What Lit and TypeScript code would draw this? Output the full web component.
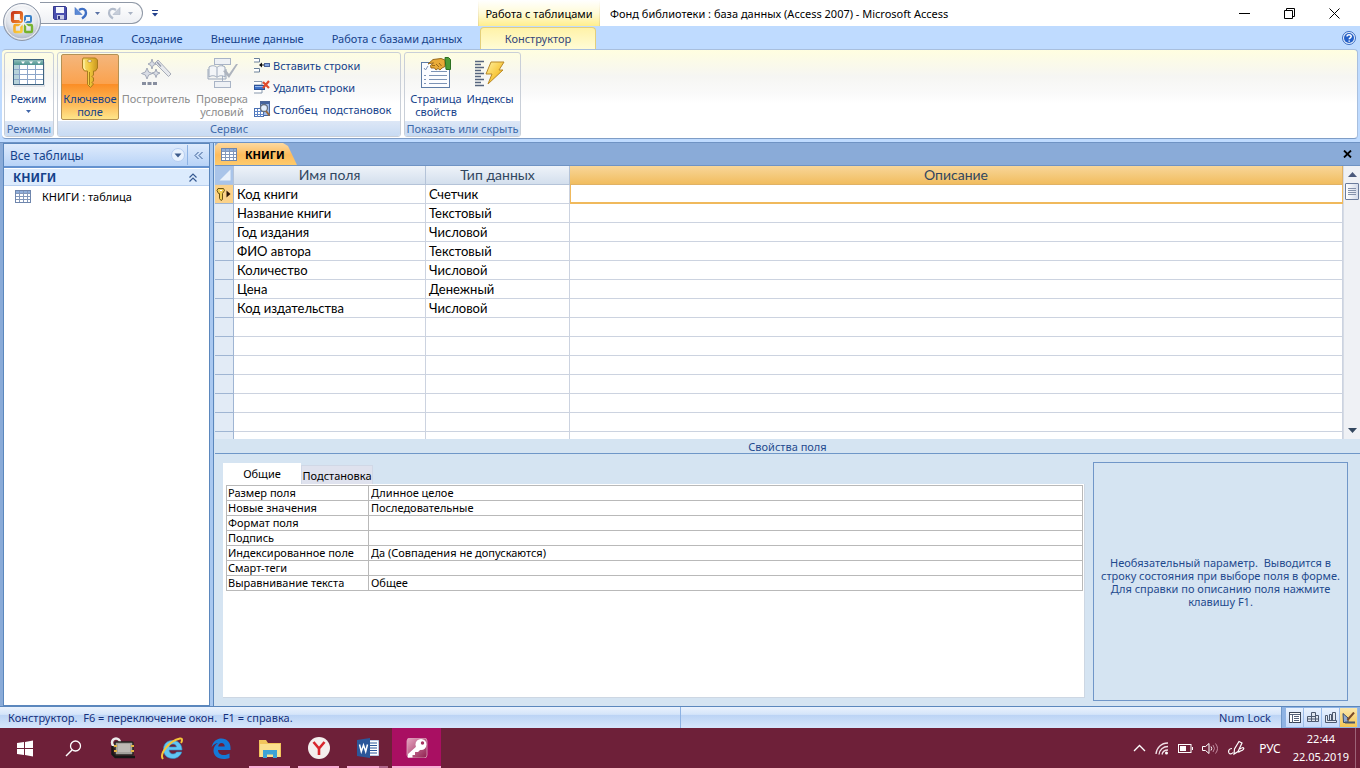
import { LitElement, html, css, svg } from "lit";
import { customElement, state } from "lit/decorators.js";
import { classMap } from "lit/directives/class-map.js";

const fields = [
  ["Код книги", "Счетчик"],
  ["Название книги", "Текстовый"],
  ["Год издания", "Числовой"],
  ["ФИО автора", "Текстовый"],
  ["Количество", "Числовой"],
  ["Цена", "Денежный"],
  ["Код издательства", "Числовой"],
];
const blankRows = Array.from({ length: 30 }, () => ["", ""]);

const properties = [
  ["Размер поля", "Длинное целое"],
  ["Новые значения", "Последовательные"],
  ["Формат поля", ""],
  ["Подпись", ""],
  ["Индексированное поле", "Да (Совпадения не допускаются)"],
  ["Смарт-теги", ""],
  ["Выравнивание текста", "Общее"],
];

const icon = (w: number, h: number, body: unknown) =>
  html`<svg class="icon" width=${w} height=${h} viewBox="0 0 ${w} ${h}" aria-hidden="true">${body}</svg>`;

const officeLogo = icon(40, 40, svg`
  <defs>
    <radialGradient id="orb" cx="50%" cy="30%" r="75%">
      <stop offset="0" stop-color="#fff"/><stop offset=".55" stop-color="#e3e6ec"/><stop offset=".85" stop-color="#b4bccb"/><stop offset="1" stop-color="#eef1f6"/>
    </radialGradient>
    <linearGradient id="lr" x1="0" y1="0" x2="1" y2="1"><stop offset="0" stop-color="#c8371b"/><stop offset="1" stop-color="#f0892c"/></linearGradient>
    <linearGradient id="ly" x1="0" y1="0" x2="1" y2="1"><stop offset="0" stop-color="#f3a427"/><stop offset="1" stop-color="#fbd23c"/></linearGradient>
  </defs>
  <circle cx="20" cy="20" r="18.5" fill="url(#orb)" stroke="#8d97a8"/>
  <circle cx="20" cy="20" r="17" fill="none" stroke="#fff" stroke-opacity=".8"/>
  <rect x="10.5" y="10.5" width="9" height="9" rx="1.5" fill="none" stroke="url(#lr)" stroke-width="3.2"/>
  <rect x="23" y="14" width="6" height="6" rx="1" fill="none" stroke="#3c82c8" stroke-width="2"/>
  <rect x="12.5" y="23" width="7" height="7" rx="1" fill="none" stroke="url(#ly)" stroke-width="2.6"/>
  <rect x="23" y="23" width="7" height="7" rx="1" fill="none" stroke="#77b32f" stroke-width="2.4"/>
  <path d="M16 16l3 3M26 17l-3 3M16 26l4-4M27 26l-4-4" stroke="#e9ecf2" stroke-width="1.6"/>`);

const saveIcon = icon(14, 14, svg`
  <path d="M.5.5h12l1 1v12H1.5l-1-1z" fill="#4a4fb0" stroke="#34388c"/>
  <rect x="3" y="1" width="8" height="6" fill="#f4f6fd"/><rect x="4" y="9" width="7" height="4.5" fill="#c7cbe6"/><rect x="5" y="10" width="2" height="3" fill="#30347e"/>`);
const undoIcon = icon(14, 14, svg`
  <path d="M5 4C9 1.5 12 3.5 12 7c0 2.5-1.5 4-4 5.5" fill="none" stroke="#3f6fc4" stroke-width="2.4"/>
  <path d="M1 1.5v7h7z" fill="#5b8ad6" stroke="#3f6fc4" stroke-width=".6"/>`);
const redoIcon = icon(14, 14, svg`
  <path d="M9 4C5 1.5 2 3.5 2 7c0 2.5 1.5 4 4 5.5" fill="none" stroke="#b3bccb" stroke-width="2.2"/>
  <path d="M13 1.5v7H6z" fill="#c6cdd9" stroke="#a9b3c4" stroke-width=".6"/>`);
const arrow = (c: string) => icon(5, 3, svg`<path d="M0 0h5L2.5 3z" fill=${c}/>`);
const customizeIcon = icon(6, 7, svg`<path d="M0 .5h6" stroke="#23408c"/><path d="M0 3h6L3 6.5z" fill="#23408c"/>`);

const minimizeIcon = icon(11, 11, svg`<path d="M0 5.5h11" stroke="#000"/>`);
const restoreIcon = icon(11, 11, svg`<path d="M.5 2.5h8v8h-8zM2.5 2.5v-2h8v8h-2" fill="none" stroke="#000"/>`);
const closeIcon = icon(11, 11, svg`<path d="M.5.5l10 10M10.5.5l-10 10" stroke="#000" fill="none"/>`);
const helpIcon = icon(14, 14, svg`
  <circle cx="7" cy="7" r="6.5" fill="#e9f1fc" stroke="#3a6cc0"/><circle cx="7" cy="7" r="5" fill="#2560c8"/>
  <path d="M5 5.6C5 3.2 9.2 3.3 9.2 5.4 9.2 6.8 7.2 6.8 7.2 8.3M7.2 9.5v1.3" fill="none" stroke="#fff" stroke-width="1.5"/>`);

const datasheetIcon = icon(32, 28, svg`
  <defs><linearGradient id="dh" x1="0" y1="0" x2="0" y2="1"><stop offset="0" stop-color="#8fbdb9"/><stop offset="1" stop-color="#4f9490"/></linearGradient></defs>
  <rect x=".5" y=".5" width="30" height="25" fill="#fff" stroke="#3f6480"/>
  <rect x="1" y="1" width="29" height="5" fill="url(#dh)"/>
  <rect x="1" y="6" width="5" height="19" fill="#b8d3da"/>
  <path d="M8 2.5h4l-2 2.5zM16 2.5h4l-2 2.5zM24 2.5h4l-2 2.5z" fill="#fff"/>
  <path d="M1 10.5h29M1 15.5h29M1 20.5h29M6.5 6v19M14.5 6v19M22.5 6v19" stroke="#8ba5c8" fill="none"/>
  <path d="M1 27h31V3" fill="none" stroke="#aab6c8" stroke-opacity=".6"/>`);
const keyIcon = icon(20, 32, svg`
  <defs><linearGradient id="kg" x1="0" y1="0" x2="1" y2="0"><stop offset="0" stop-color="#f8e27a"/><stop offset=".5" stop-color="#efc63a"/><stop offset="1" stop-color="#c8951f"/></linearGradient></defs>
  <path d="M3 1h12.5l2 2v8l-2 3h-2v4l-1.5 1.5 1.5 1.5v3l-1.5 1.5 1.5 1.5-3 3.5-3-3V14h-3l-2-3V3z" fill="url(#kg)" stroke="#a37618" stroke-width=".9"/>
  <ellipse cx="9.7" cy="4" rx="2.2" ry="1.2" fill="#fff" stroke="#a37618" stroke-width=".7"/>
  <path d="M9.5 15v13" stroke="#a87d1c"/><path d="M4 3v8l1.5 2" stroke="#fff6b8" fill="none"/>`);
const wandIcon = icon(32, 30, svg`
  <path d="M15 5l3-3L31 16l-2.5 2.5z" fill="#e7e9ed" stroke="#a7acb8"/><path d="M17 4l4 4.5" stroke="#969dae" stroke-width="1.5"/>
  <path d="M12 1l1 3.5 3 1.5-3 1.5-1 3.5-1-3.5L8 6l3-1.5zM7 10l1.6 4 3.9 1.5-3.9 1.5L7 21l-1.6-4-3.9-1.5L5.4 14zM16 11l1 3 3 1-3 1.5-1 3-1-3-3-1.5 3-1z" fill="#d9dde5" stroke="#9ba2b2" stroke-width=".9"/>
  <path d="M2 25.5h4M7.5 25.5h4M13 25.5h4" stroke="#878e9f" stroke-width="3"/>`);
const rulesIcon = icon(32, 32, svg`
  <rect x="8.5" y="1.5" width="16" height="6" fill="#eef1f5" stroke="#a9b4c6"/><rect x="8.5" y="24.5" width="16" height="6" fill="#eef1f5" stroke="#a9b4c6"/>
  <path d="M16.5 8v16" stroke="#a9b4c6"/>
  <path d="M3 10c3-2 6-1.5 8 .5 2-2 5-2.5 8-.5v10c-3-2-6-1.5-8 .5-2-2-5-2.5-8-.5z" fill="#f3f5f8" stroke="#9ba7ba"/><path d="M11 10.5V20M2 12v10h18V12" stroke="#9ba7ba" fill="none"/>
  <path d="M17 14l3-1 3 4 7-10 2 0-9 14z" fill="#aeb4be"/>`);
const insertRowsIcon = icon(16, 16, svg`
  <path d="M0 1.5h5.5V5H0M0 11.5h5.5V15H0" fill="#fff" stroke="#6b8098"/>
  <path d="M6.5 8h5" stroke="#111"/><path d="M5 8l3-2.5v5z" fill="#111"/><rect x="10.5" y="6.5" width="5" height="3" fill="#86a9e2" stroke="#4a6398"/>`);
const deleteRowsIcon = icon(16, 16, svg`
  <path d="M0 2.5h8V6H0M0 10.5h8V14H0" fill="#fff" stroke="#8797ac"/>
  <rect x=".5" y="6.5" width="10" height="4" fill="#3e72c8" stroke="#2c5299"/><rect x="1" y="7" width="9" height="1" fill="#9bbcf0"/>
  <path d="M9 3l6 6M15 2L9 9" stroke="#e04a2c" stroke-width="2.2"/>`);
const lookupIcon = icon(17, 17, svg`
  <rect x="6.5" y=".5" width="9" height="14" fill="#9ebaea" stroke="#4a6597"/><rect x="7" y="1" width="8" height="2" fill="#45649e"/>
  <rect x=".5" y="7.5" width="9" height="8" fill="#fff" stroke="#4b71b4"/><path d="M.5 10.5h9M.5 13.5h9M3.5 8v8M6.5 8v8" stroke="#5f86c8"/>
  <circle cx="10" cy="7" r="3.5" fill="#e3eefc" stroke="#66707e" stroke-width="1.3"/><path d="M12 10l3.5 4.5" stroke="#9a6a3c" stroke-width="2"/>`);
const propertySheetIcon = icon(32, 32, svg`
  <rect x="1.5" y="5.5" width="28" height="25" fill="#fbfcff" stroke="#5d7ba6"/>
  <path d="M4 11l1.5 2L8 9M11 14.5h16M4 18.5h2M9 18.5h18M4 22.5h2M9 22.5h18M4 26.5h2M9 26.5h18" stroke="#7b92b5" fill="none"/>
  <path d="M8 7l5-4.5 8-1 4 1.5v6.500l-3 1.500-2 2-2-1.500-2 1.500-1.500-2H11l-.5-2.500 3-2.500-4 .5z" fill="#e9ab38" stroke="#8f5f12" stroke-width=".9"/>
  <path d="M16 7l3 3M19 6l2.5 3M12 8.500h3" stroke="#9c6a18" fill="none"/>
  <path d="M25 .5h3.5l2 2v10H26z" fill="#4c9c37" stroke="#2c7020"/>`);
const indexIcon = icon(32, 28, svg`
  <path d="M1 2.5h9M1 5.5h6M1 8.5h9M1 11.5h6M1 14.5h9M1 17.5h6M1 20.5h9M1 23.5h6M1 26.5h9" stroke="#56657e" stroke-width="1.3"/>
  <defs><linearGradient id="bolt" x1="0" y1="0" x2="1" y2="1"><stop offset="0" stop-color="#fdf1a4"/><stop offset=".6" stop-color="#f8c638"/><stop offset="1" stop-color="#dc8d1d"/></linearGradient></defs>
  <path d="M17 3h13l-5 8h4L14 25l4-10h-6z" fill="url(#bolt)" stroke="#b98928"/>`);

const smallTable = icon(16, 13, svg`
  <rect x=".5" y=".5" width="15" height="12" fill="#fff" stroke="#6f86ad"/><rect x="1" y="1" width="14" height="2.5" fill="#8faedb"/>
  <path d="M1 3.5h14M1 6.5h14M1 9.5h14M4.5 1v11M8.5 1v11M12.5 1v11" stroke="#8398bb"/>`);
const dropIcon = icon(14, 14, svg`<circle cx="7" cy="7" r="6.5" fill="#e8f1fd" stroke="#b5cdf0"/><path d="M3.5 5.5h7L7 9.5z" fill="#3e5c8c"/>`);
const collapseIcon = icon(9, 9, svg`<path d="M4.5 1L1 4.5 4.5 8M8.5 1L5 4.5 8.5 8" fill="none" stroke="#365a92"/>`);
const foldIcon = icon(8, 9, svg`<path d="M.5 4.5L4 1l3.5 3.5M.5 8.5L4 5l3.5 3.5" fill="none" stroke="#365a92" stroke-width="1.2"/>`);
const cornerIcon = icon(18, 18, svg`<path d="M15.5 3.5v11H4.5z" fill="#e9f1fb"/>`);
const rowKeyIcon = icon(16, 13, svg`
  <path d="M2 .5h5.5l1 2-2 3v6L5 12.500l-1.500-2v-5H2.500l-1.500-3z" fill="#f2ce57" stroke="#6d5413"/><path d="M4 2.5h2" stroke="#fff"/><path d="M10.5 2.5v7l4-3.5z" fill="#2c1608"/>`);
const docCloseIcon = icon(9, 8, svg`<path d="M1 .5l7 7M8 .5l-7 7" stroke="#000" stroke-width="1.8"/>`);
const scrollUpIcon = icon(9, 5, svg`<path d="M0 5h9L4.5 0z" fill="#4b5a7c"/>`);
const scrollDownIcon = icon(9, 5, svg`<path d="M0 0h9L4.5 5z" fill="#33475f"/>`);
const gripIcon = icon(8, 9, svg`<path d="M0 1.5h8M0 3.5h8M0 5.5h8M0 7.5h8" stroke="#8592ab"/>`);

const viewIcons: [string, unknown][] = [
  ["Режим таблицы", icon(12, 11, svg`<rect x=".5" y=".5" width="11" height="10" fill="#fff" stroke="#3c4658"/><path d="M1 2.5h10M3.5 3v8M5 4.5h5M5 6.5h5M5 8.5h5" stroke="#55627a"/>`)],
  ["Сводная таблица", icon(12, 11, svg`<path d="M4.5.5h4v4h-4zM.5 4.5h4v5h-4zM4.5 4.5h4v5h-4zM8.5 3.5h3v6h-3zM1 7h11" fill="#dfe5ee" stroke="#4d596e"/>`)],
  ["Сводная диаграмма", icon(12, 11, svg`<path d="M.5 3.5h2v5h9v2H.5zM4.5 2.5h2v6h-2zM7.5.5h3v8h-3z" fill="#e4e9f2" stroke="#4d596e"/>`)],
  ["Конструктор", icon(14, 12, svg`<path d="M1 1.5l5 4.5v4.5H1.5z" fill="#8fa8cf" stroke="#394a66"/><path d="M12 .5L5.5 8" stroke="#7a4a2a" stroke-width="2"/><path d="M3 10.5h10" stroke="#49566c" stroke-width="2"/>`)],
];

const taskIcons: { name: string; cls?: string; art: unknown }[] = [
  { name: "Пуск", art: icon(16, 17, svg`<path d="M0 3l7-1v6H0zM8 2l8-1.5V8H8zM0 9h7v6l-7-1zM8 9h8v7.5L8 15z" fill="#fff"/>`) },
  { name: "Поиск", art: icon(17, 17, svg`<circle cx="10.5" cy="6" r="5" fill="none" stroke="#fff" stroke-width="1.3"/><path d="M7 10L1 16" stroke="#fff" stroke-width="1.5"/>`) },
  { name: "Процессор", art: icon(26, 22, svg`
    <circle cx="6" cy="5.5" r="4" fill="none" stroke="#ececec" stroke-width="2.5"/><path d="M2.5 9v8l3 3H25" fill="none" stroke="#161616" stroke-width="2.5"/>
    <rect x="5" y="5" width="18" height="13" rx="1" fill="#a3a19c" stroke="#262421" stroke-width="1.5"/><rect x="8" y="7" width="12" height="8" fill="#bdbab4"/>
    <path d="M4 9h3M4 14h3M21 9h3M21 14h3" stroke="#e3b244" stroke-width="2"/>`) },
  { name: "Internet Explorer", art: icon(24, 23, svg`
    <path d="M3.5 11.5C4 6 8 3.5 12.5 3.5c6 0 9.5 4 9.5 9.5H9c.3 2.5 1.8 4 4 4 1.7 0 3-.8 3.5-2h5.2C20.5 19 17 21.5 13 21.5 7 21.5 3 17.5 3.5 11.5zM9.2 10h7.3C16.2 8 15 7 13 7s-3.5 1-3.8 3z" fill="#62c6f2" stroke="#2b93cf" stroke-width=".6"/>
    <path d="M3 22C-1 17 9 4 20 1.5c3-.5 2 3 1 4.5" fill="none" stroke="#f5c53a" stroke-width="2"/>`) },
  { name: "Microsoft Edge", art: icon(20, 21, svg`
    <path d="M.5 9.5C2 3 6 .5 10.5.5 16 .5 19.5 4.5 19.5 9.5V12H7c0 3 2.5 5 6 5 2.2 0 4-.6 5.5-1.5V20c-2 .8-4 1-6 1C6 21 2.5 17 2.5 12.5c0-3.5 2-6 4.5-7.5C4 5.5 2 7 .5 9.5zM7.2 8.5h6.5C13.7 6.3 12.5 5 10.5 5 8.7 5 7.5 6.5 7.2 8.5z" fill="#1479d7"/>`) },
  { name: "Проводник", cls: "run", art: icon(22, 19, svg`
    <path d="M0 1h7l2 3h13v14H0z" fill="#f2c55c"/><path d="M1 5h20v13H1z" fill="#fbe08f"/>
    <path d="M4 19v-8h14v8h-4v-3.5H8V19z" fill="#3ca2d6"/>`) },
  { name: "Яндекс", cls: "run", art: icon(22, 22, svg`<circle cx="11" cy="11" r="11" fill="#f4efed"/><path d="M5.5 5l5.5 6.5L16.5 5M11 11v7" fill="none" stroke="#d8262c" stroke-width="2.6"/>`) },
  { name: "Word", cls: "run stack", art: icon(22, 20, svg`
    <path d="M12 2.5h9.5v15H12z" fill="#fff" stroke="#b9c9e4"/><path d="M13 5h7M13 7.5h7M13 10h7M13 12.5h7M13 15h7" stroke="#2b579a"/>
    <path d="M0 2l13-2v20L0 18z" fill="#2b579a"/><path d="M2.5 6.5l1.8 7 2.2-6.5 2.2 6.5 1.8-7" fill="none" stroke="#fff" stroke-width="1.5"/>`) },
  { name: "Access", cls: "run active", art: icon(22, 20, svg`
    <defs><linearGradient id="ac" x1="0" y1="0" x2="1" y2="1"><stop offset="0" stop-color="#e8a6c2"/><stop offset="1" stop-color="#8f1f4e"/></linearGradient></defs>
    <rect x="1" y="0" width="20" height="20" rx="3" fill="url(#ac)" stroke="#dba3bb" stroke-width=".8"/>
    <circle cx="15" cy="6.5" r="5.5" fill="#fff"/><path d="M12 7L2 16v3.5h4.5V17H9v-3h3l3-3z" fill="#fff"/><circle cx="16.5" cy="5" r="1.7" fill="#a3345f"/>`) },
];

const trayIcons: [string, unknown][] = [
  ["Скрытые значки", icon(13, 8, svg`<path d="M1 7l5.5-5.5L12 7" fill="none" stroke="#fff" stroke-width="1.3"/>`)],
  ["Сеть", icon(14, 13, svg`<path d="M1 12C1.5 6 6 1 13 1M4 12.5C4.5 8 8 4.5 13 4.5M7 12.5C7.5 10 9.5 8 13 8" fill="none" stroke="#f0dfe5" stroke-width="1.3"/><circle cx="11.5" cy="11" r="1.5" fill="#fff"/>`)],
  ["Батарея", icon(15, 9, svg`<rect x=".5" y=".5" width="12.5" height="8" fill="none" stroke="#fff"/><rect x="2" y="2" width="6" height="5" fill="#fff"/><path d="M14.5 3v3" stroke="#fff"/>`)],
  ["Громкость", icon(17, 13, svg`<path d="M.5 4.5h3L7 1.5v10L3.5 8.5h-3z" fill="none" stroke="#fff"/><path d="M9 4.5q1.5 2 0 4" fill="none" stroke="#fff"/><path d="M11 3q3 3.5 0 7M13.5 1.5q4 5 0 10" fill="none" stroke="#c38ba0"/>`)],
  ["Windows Ink", icon(17, 16, svg`<path d="M6 14l.5-5L11 1.5 14 3l-4 8.5zM4 8.5C1 8.5 0 11 1 13c1 1.5 3 1 4-.5M12 9c4-3 5 0 2 1.5-2 1-3 .5-3.5 2" fill="none" stroke="#fff" stroke-width="1.2"/>`)],
];

@customElement("app-root")
export class AppRoot extends LitElement {
  @state() private sheet = 0;

  static styles = css`
    :host { display: block; }
    * { box-sizing: border-box; }
    button, input {
      font: inherit; color: inherit; background: none; border: 0; padding: 0; margin: 0; outline: 0;
      text-align: inherit;
    }
    button { display: flex; align-items: center; justify-content: center; white-space: nowrap; }
    .icon { display: block; flex: none; }
    .app {
      display: flex; flex-direction: column; height: 100vh; min-height: 600px;
      font: 11px/13px "Noto Sans", "Open Sans", sans-serif; color: #000; background: #bfdbff; overflow: hidden;
    }

    .top {
      position: relative; flex: none; display: grid;
      grid-template-columns: 478px 122px 1fr; grid-template-rows: 26px 23px;
    }
    .office { position: absolute; left: 2px; top: 2px; border-radius: 50%; }
    .quick { background: #fff; display: flex; align-items: center; padding-left: 40px; gap: 9px; }
    .bar {
      display: flex; align-items: center; height: 22px; width: 103px; padding-left: 13px; gap: 7px;
      border: 1px solid #8f98a6; border-left: 0; border-radius: 0 11px 11px 0;
      background: linear-gradient(#fff, #eef0f4);
    }
    .context {
      display: flex; align-items: center; justify-content: center; white-space: nowrap;
      background: linear-gradient(#fff, #fffbd8 50%, #ffee8c); border: solid #ecd98a; border-width: 0 1px;
      border-image: linear-gradient(#fff, #ecd98a) 0 1;
    }
    .title { display: flex; background: #fff; align-items: center; justify-content: space-between; padding: 0 3px 0 10px; }
    .window { display: flex; align-self: stretch; }
    .window button { width: 45px; }
    .tabs { display: flex; padding: 1px 0 0 46px; color: #15428b; }
    .tabs button { padding: 0 14px; }
    .tab-on {
      margin: 1px 4px 0 2px; color: #33467a; border: 1px solid #e3cf7b; border-bottom: 0; border-radius: 4px 4px 0 0;
      background: linear-gradient(#fff2a8, #fffcd6);
    }
    .help { display: flex; justify-content: flex-end; align-items: center; padding-right: 4px; }

    .ribbon {
      flex: none; display: flex; gap: 3px; margin: 0 2px 3px; padding: 2px 2px 1px; height: 90px; color: #15428b;
      border: 1px solid #a9bfdd; border-left-width: 0; border-bottom-color: #7f9dc6; border-radius: 4px;
      background: linear-gradient(#fffee0, #f6f6f3 30%, #fafafa 50%, #fff 60%);
    }
    .group {
      display: flex; flex-direction: column; border: 1px solid #c9cfd8; border-radius: 3px; overflow: hidden;
    }
    .tools { flex: 1; display: flex; padding: 0 3px; min-height: 0; }
    .caption {
      height: 15px; line-height: 15px; text-align: center; white-space: nowrap; color: #3e6aaa;
      background: linear-gradient(#dde7f6, #c8dbf3);
    }
    .big {
      flex-direction: column; justify-content: flex-start; gap: 2px; padding-top: 1px; text-align: center; height: 66px; margin-top: 1px;
      border: 1px solid transparent; border-radius: 2px;
    }
    .big .art { height: 34px; display: flex; align-items: center; }
    .big.dim { color: #8d8d8d; }
    .big.on {
      border-color: #b49154; background: linear-gradient(#f4b67c, #fba24e 45%, #fb8e26 46%, #fdc060 80%, #fee58a);
    }
    .lines { display: flex; flex-direction: column; align-items: center; }
    .lines .icon { margin-top: 5px; }
    .small { display: flex; flex-direction: column; padding: 1px 0 0 3px; }
    .small button { height: 22px; gap: 2px; justify-content: flex-start; white-space: pre; }
    .small .art { width: 17px; }
    .w-view { width: 50px; }
    .w-view .tools { padding: 0; }
    .w-view .big { width: 47px; }
    .w-tools { width: 344px; }
    .w-show { width: 117px; }
    .c-key { width: 58px; }
    .c-wand { width: 74px; }
    .c-rules { width: 58px; }
    .c-sheet { width: 56px; }
    .c-index { width: 52px; }

    .main { flex: 1; display: flex; min-height: 0; background: #8aabd8; padding-left: 3px; border-top: 1px solid #6f93c4; }
    .nav {
      width: 207px; flex: none; display: flex; flex-direction: column; background: #fff;
      border: 1px solid #5b87bd;
    }
    .nav-head {
      display: flex; align-items: center; height: 24px; padding: 0 0 0 6px; font-size: 12px; color: #15428b;
      background: linear-gradient(#dfebfc, #b8d3f7); border-bottom: 2px solid #6592cf;
    }
    .nav-head span { flex: 1; }
    .nav-head button { height: 20px; }
    .nav-head .fold { width: 22px; margin-left: 2px; border-left: 1px solid #8db2e3; }
    .nav-group {
      display: flex; align-items: center; justify-content: space-between; height: 18px; padding: 0 12px 0 9px;
      font-weight: 700; font-size: 12px; color: #15428b; background: #dcebfd; border-bottom: 1px solid #b9d0ef; border-top: 1px solid #fff;
    }
    .nav-item { justify-content: flex-start; gap: 11px; height: 20px; padding-left: 11px; }
    .split { width: 4px; flex: none; background: #a9c8f0; border-right: 1px solid #5b87bd; }
    .doc { flex: 1; min-width: 0; display: flex; flex-direction: column; background: #d5e4f2; padding-left: 1px; }
    .doc-tabs {
      display: flex; justify-content: space-between; align-items: center; height: 23px; padding-right: 8px; flex: none;
      background: #8aabd8; border-bottom: 1px solid #6f93c4;
    }
    .doc-tab {
      justify-content: flex-start; gap: 8px; height: 22px; width: 82px; padding-left: 6px; font-weight: 700;
      background: linear-gradient(#fdd9a0, #fdbb5c 55%, #fecb6c);
      clip-path: polygon(0 3px, 3px 0, 68px 0, 73px 3px, 82px 100%, 0 100%);
    }

    .sheet { flex: 1; display: flex; min-height: 0; background: #fff; }
    .view { flex: 1; min-width: 0; overflow: hidden; }
    .grid {
      width: 100%; border-collapse: separate; border-spacing: 0; table-layout: fixed;
      font: 13px/18px "Lato", "Carlito", "Noto Sans", sans-serif;
    }
    .grid th, .grid td { height: 19px; padding: 0 3px; border: solid #ccd3e0; border-width: 0 1px 1px 0; white-space: nowrap; overflow: hidden; }
    .grid thead th { font-weight: 400; font-size: 14px; color: #31465f; background: linear-gradient(#eef3f9, #d3dfed); border-color: #b4c3d8; }
    .grid thead th.corner { background: #a9c4e9; padding: 0; }
    .grid thead th.hot { background: linear-gradient(#f8d699, #f1bd5f); border-color: #e0b266; }
    .grid tbody th { background: #e2ebf6; border-color: #9fb5d3; padding: 0 0 0 1px; }
    .grid tbody th.current { background: #fbd28a; }
    .grid td.edit { padding: 0; border: 2px solid #f0b95c; border-top: 0; border-left-width: 1px; border-right-width: 1px; }
    .grid input { display: block; width: 100%; height: 17px; padding: 0 3px; }
    .c0 { width: 19px; } .c1 { width: 192px; } .c2 { width: 144px; }
    .scroll {
      width: 17px; flex: none; display: flex; flex-direction: column; align-items: center; justify-content: space-between;
      background: #eff1f5; padding: 6px 0; border-left: 1px solid #d5dbe5;
    }
    .scroll-up { display: flex; flex-direction: column; align-items: center; gap: 6px; }
    .thumb {
      width: 14px; height: 17px; border: 1px solid #6b7c9c; border-radius: 1px; display: flex; align-items: center; justify-content: center;
      background: linear-gradient(90deg, #fff, #d5dcea);
    }
    .prop-title {
      flex: none; height: 15px; line-height: 15px; text-align: center; color: #1f4a8e; border-bottom: 1px solid #6f97c8;
    }
    .props { flex: none; display: flex; gap: 8px; padding: 8px 12px 5px 8px; height: 252px; }
    .prop-left { flex: 1; min-width: 0; display: flex; flex-direction: column; }
    .prop-tabs { display: flex; align-items: flex-end; height: 22px; flex: none; }
    .prop-tabs button { height: 19px; width: 72px; background: #dfe2ee; border: 1px solid #d0d8e6; border-bottom: 0; }
    .prop-tabs button.sel { width: 78px; height: 21px; padding-bottom: 2px; background: #fff; border-color: #fff; }
    .prop-body { flex: 1; background: #fff; padding: 1px 1px 0 3px; border: solid #cdd7e3; border-width: 0 1px 1px 0; margin-bottom: 3px; }
    .prop-table { width: 100%; border-collapse: collapse; table-layout: fixed; }
    .prop-table th, .prop-table td { height: 15px; padding: 0 2px; border: 1px solid #b9b9b9; text-align: left; font-weight: 400; white-space: nowrap; }
    .prop-table th { width: 142px; padding: 0 1px; }
    .prop-table label, .prop-table input { display: block; width: 100%; height: 14px; line-height: 14px; }
    .hint {
      width: 255px; flex: none; border: 1px solid #7096c8; display: flex; align-items: center; justify-content: center;
      text-align: center; color: #1f4a8e; white-space: pre-wrap; padding: 0 4px;
    }
    .hint p { margin: 0; }

    .status {
      flex: none; display: flex; align-items: center; height: 22px; color: #15307c; white-space: pre;
      background: linear-gradient(#eaf2fd, #d5e5fa 35%, #bcd4f5 40%, #d6e6fb); border-top: 1px solid #5b87bd;
    }
    .status .msg { width: 50%; padding-left: 8px; }
    .status .lock { flex: 1; display: flex; justify-content: flex-end; align-self: stretch; align-items: center; padding-right: 10px; border-left: 1px solid #8db2e3; }
    .views { display: flex; align-self: stretch; padding: 1px 2px 1px 4px; border-left: 1px solid #6f97c8; background: #8fb3e3; }
    .views button { width: 18px; background: linear-gradient(#eaf2fd, #c5dafa); border-right: 1px solid #9cbce8; }
    .views button.on { background: linear-gradient(#fbe8ad, #f5c653); }

    .taskbar { flex: none; display: flex; justify-content: space-between; height: 40px; background: #6e2039; color: #fff; }
    .apps { display: flex; }
    .apps button { width: 49px; border: solid transparent; border-width: 2px 0; }
    .apps .run { border-image: linear-gradient(90deg, transparent 4px, #f9aed6 4px, #f9aed6 45px, transparent 45px) 0 0 2 0; }
    .apps .stack { border-image: linear-gradient(90deg, transparent 4px, #f9aed6 4px, #f9aed6 36px, #b0688c 36px, #b0688c 45px, transparent 45px) 0 0 2 0; }
    .apps .active { background: #a90f62; border-image: none; border-color: #a90f62 #a90f62 #f9aed6; }
    .tray { display: flex; align-items: stretch; gap: 9px; }
    .lang { font-size: 12px; margin-left: 5px; }
    .clock {
      flex-direction: column; text-align: center; line-height: 18px;
      margin: 0 4px 0 3px; padding-right: 6px; border-right: 1px solid #9c6377;
    }
  `;

  private big(cls: string, art: unknown, lines: string[], extra: unknown = "") {
    return html`<button class="big ${cls}" ?disabled=${cls.includes("dim")}>
      <span class="art">${art}</span>
      <span class="lines">${lines.map((l) => html`<span>${l}</span>`)}${extra}</span>
    </button>`;
  }

  private row(f: string[], i: number) {
    return html`<tr>
      <th class=${classMap({ current: i === 0 })} scope="row">${i === 0 ? rowKeyIcon : ""}</th>
      <td>${f[0]}</td><td>${f[1]}</td>
      ${i === 0 ? html`<td class="edit"><input aria-label="Описание" /></td>` : html`<td></td>`}
    </tr>`;
  }

  render() {
    return html`<div class="app">
      <header class="top">
        <div class="quick">
          <div class="bar">
            <button aria-label="Сохранить">${saveIcon}</button>
            <button aria-label="Отменить">${undoIcon}</button>
            <button aria-label="Список отмены">${arrow("#5a72a5")}</button>
            <button aria-label="Вернуть">${redoIcon}</button>
            <button aria-label="Список возврата">${arrow("#a9b3c4")}</button>
          </div>
          <button aria-label="Настройка панели">${customizeIcon}</button>
        </div>
        <div class="context">Работа с таблицами</div>
        <div class="title">
          <span>Фонд библиотеки : база данных (Access 2007) - Microsoft Access</span>
          <div class="window">
            <button aria-label="Свернуть">${minimizeIcon}</button>
            <button aria-label="Восстановить">${restoreIcon}</button>
            <button aria-label="Закрыть">${closeIcon}</button>
          </div>
        </div>
        <nav class="tabs">
          <button>Главная</button><button>Создание</button><button>Внешние данные</button><button>Работа с базами данных</button>
        </nav>
        <button class="tab-on">Конструктор</button>
        <div class="help"><button aria-label="Справка">${helpIcon}</button></div>
        <button class="office" aria-label="Office">${officeLogo}</button>
      </header>

      <section class="ribbon">
        <div class="group w-view">
          <div class="tools">${this.big("", datasheetIcon, ["Режим"], arrow("#3f65a8"))}</div>
          <div class="caption">Режимы</div>
        </div>
        <div class="group w-tools">
          <div class="tools">
            ${this.big("c-key on", keyIcon, ["Ключевое", "поле"])}
            ${this.big("c-wand dim", wandIcon, ["Построитель"])}
            ${this.big("c-rules dim", rulesIcon, ["Проверка", "условий"])}
            <div class="small">
              <button><span class="art">${insertRowsIcon}</span>Вставить строки</button>
              <button><span class="art">${deleteRowsIcon}</span>Удалить строки</button>
              <button><span class="art">${lookupIcon}</span>Столбец  подстановок</button>
            </div>
          </div>
          <div class="caption">Сервис</div>
        </div>
        <div class="group w-show">
          <div class="tools">
            ${this.big("c-sheet", propertySheetIcon, ["Страница", "свойств"])}
            ${this.big("c-index", indexIcon, ["Индексы"])}
          </div>
          <div class="caption">Показать или скрыть</div>
        </div>
      </section>

      <main class="main">
        <aside class="nav">
          <div class="nav-head">
            <span>Все таблицы</span>
            <button aria-label="Категории">${dropIcon}</button>
            <button class="fold" aria-label="Свернуть область">${collapseIcon}</button>
          </div>
          <div class="nav-group">КНИГИ <button aria-label="Свернуть группу">${foldIcon}</button></div>
          <button class="nav-item">${smallTable}<span>КНИГИ : таблица</span></button>
        </aside>
        <div class="split"></div>
        <section class="doc">
          <div class="doc-tabs">
            <button class="doc-tab">${smallTable}КНИГИ</button>
            <button aria-label="Закрыть таблицу">${docCloseIcon}</button>
          </div>
          <div class="sheet">
            <div class="view">
              <table class="grid">
                <colgroup><col class="c0" /><col class="c1" /><col class="c2" /><col /></colgroup>
                <thead><tr><th class="corner">${cornerIcon}</th><th>Имя поля</th><th>Тип данных</th><th class="hot">Описание</th></tr></thead>
                <tbody>${[...fields, ...blankRows].map((f, i) => this.row(f, i))}</tbody>
              </table>
            </div>
            <div class="scroll">
              <div class="scroll-up">
                <button aria-label="Вверх">${scrollUpIcon}</button>
                <div class="thumb">${gripIcon}</div>
              </div>
              <button aria-label="Вниз">${scrollDownIcon}</button>
            </div>
          </div>
          <div class="prop-title">Свойства поля</div>
          <div class="props">
            <div class="prop-left">
              <div class="prop-tabs">
                ${["Общие", "Подстановка"].map((t, i) => html`<button class=${classMap({ sel: this.sheet === i })} @click=${() => (this.sheet = i)}>${t}</button>`)}
              </div>
              <div class="prop-body">
                <table class="prop-table">
                  ${properties.map(([k, v], i) => html`<tr><th><label for="p${i}">${k}</label></th><td><input id="p${i}" .value=${v} /></td></tr>`)}
                </table>
              </div>
            </div>
            <div class="hint"><p>Необязательный параметр.  Выводится в строку состояния при выборе поля в форме.  Для справки по описанию поля нажмите клавишу F1.</p></div>
          </div>
        </section>
      </main>

      <footer class="status">
        <span class="msg">Конструктор.  F6 = переключение окон.  F1 = справка.</span>
        <span class="lock">Num Lock</span>
        <div class="views">${viewIcons.map(([n, art], i) => html`<button class=${classMap({ on: i === 3 })} aria-label=${n}>${art}</button>`)}</div>
      </footer>

      <div class="taskbar">
        <div class="apps">${taskIcons.map((t) => html`<button class=${t.cls ?? ""} aria-label=${t.name}>${t.art}</button>`)}</div>
        <div class="tray">
          ${trayIcons.map(([n, art]) => html`<button aria-label=${n}>${art}</button>`)}
          <button class="lang">РУС</button>
          <button class="clock"><span>22:44</span><span>22.05.2019</span></button>
        </div>
      </div>
    </div>`;
  }
}
